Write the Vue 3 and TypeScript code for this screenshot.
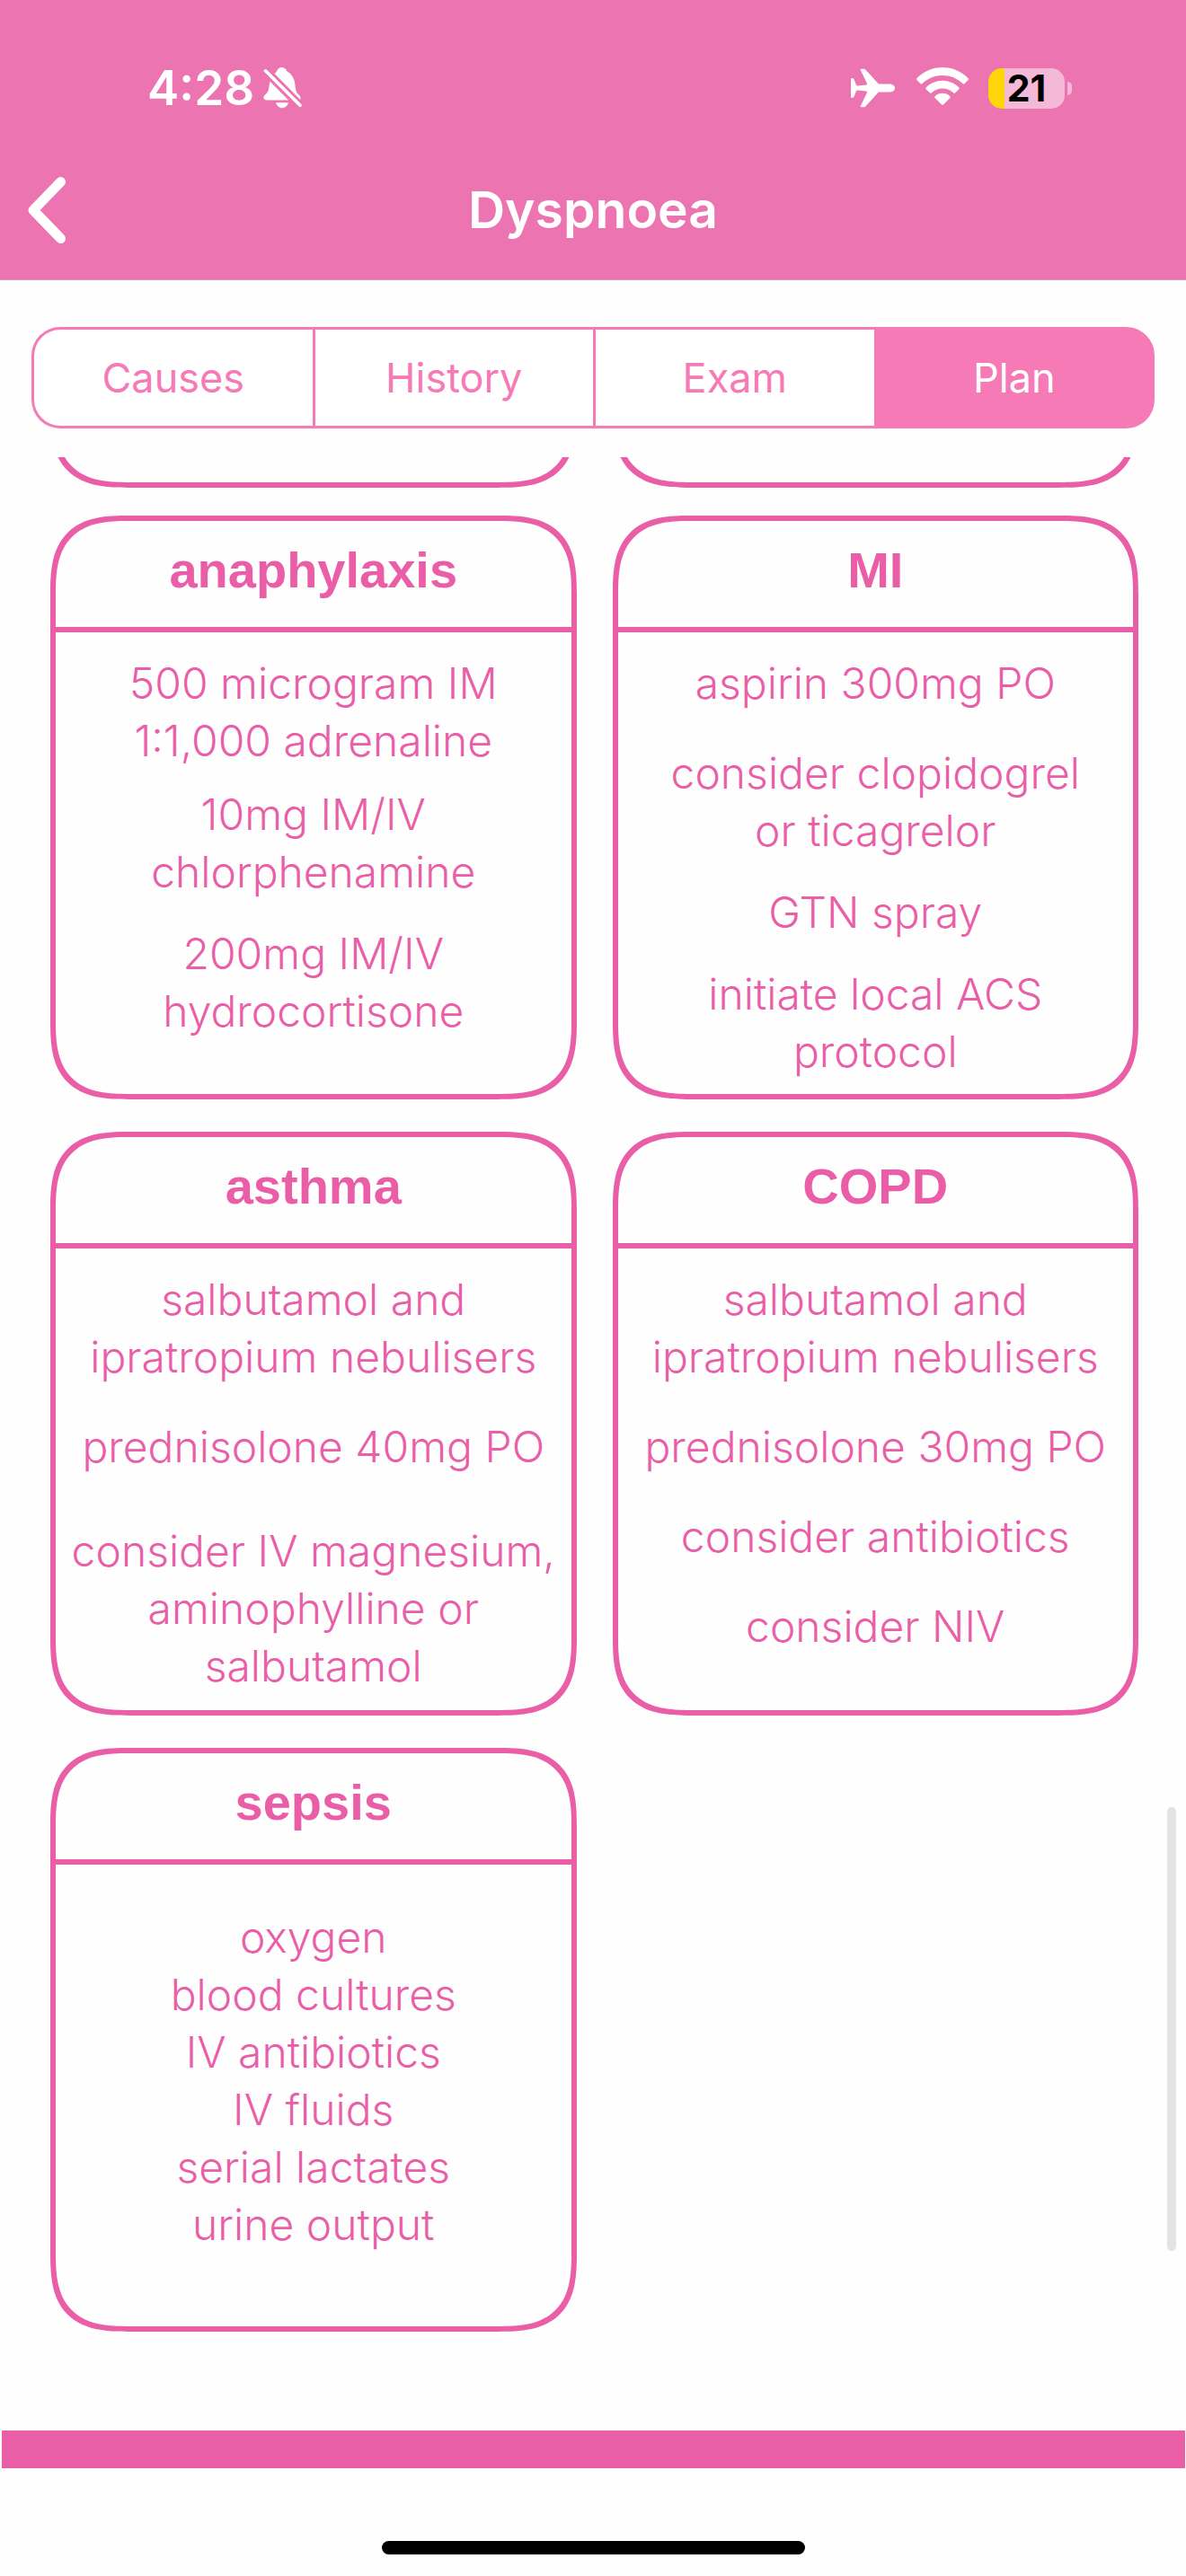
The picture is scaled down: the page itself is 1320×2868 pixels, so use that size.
<script setup lang="ts">
import { ref } from 'vue'

type Gap = 'none' | 'small' | 'medium' | 'large' | 'wide'

interface Step {
  lines: string[]
  gap: Gap
}

interface Card {
  title: string
  steps: Step[]
  centred?: boolean
}

const tabs: string[] = ['Causes', 'History', 'Exam', 'Plan']
const activeTab = ref<string>('Plan')

const cards: Card[] = [
  {
    title: 'anaphylaxis',
    steps: [
      { lines: ['500 microgram IM', '1:1,000 adrenaline'], gap: 'none' },
      { lines: ['10mg IM/IV', 'chlorphenamine'], gap: 'small' },
      { lines: ['200mg IM/IV', 'hydrocortisone'], gap: 'medium' },
    ],
  },
  {
    title: 'MI',
    steps: [
      { lines: ['aspirin 300mg PO'], gap: 'none' },
      { lines: ['consider clopidogrel', 'or ticagrelor'], gap: 'large' },
      { lines: ['GTN spray'], gap: 'medium' },
      { lines: ['initiate local ACS', 'protocol'], gap: 'medium' },
    ],
  },
  {
    title: 'asthma',
    steps: [
      { lines: ['salbutamol and', 'ipratropium nebulisers'], gap: 'none' },
      { lines: ['prednisolone 40mg PO'], gap: 'large' },
      { lines: ['consider IV magnesium,', 'aminophylline or', 'salbutamol'], gap: 'wide' },
    ],
  },
  {
    title: 'COPD',
    steps: [
      { lines: ['salbutamol and', 'ipratropium nebulisers'], gap: 'none' },
      { lines: ['prednisolone 30mg PO'], gap: 'large' },
      { lines: ['consider antibiotics'], gap: 'large' },
      { lines: ['consider NIV'], gap: 'large' },
    ],
  },
  {
    title: 'sepsis',
    centred: true,
    steps: [
      {
        lines: ['oxygen', 'blood cultures', 'IV antibiotics', 'IV fluids', 'serial lactates', 'urine output'],
        gap: 'none',
      },
    ],
  },
]
</script>

<template>
  <div class="screen">
    <header class="header">
      <div class="status">
        <div class="status-left">
          <span class="time">4:28</span>
          <svg class="bell" viewBox="0 0 44 46" aria-hidden="true">
            <path d="M12.6 7C14 5.500 14.500 5.500 15 4.500C16 1.500 18 0 20.500 0S25.500 1.500 26.500 4.500C27.500 5.500 29 5.500 30.500 7.500C34 11.500 35 15 35.500 20C36 25 36.500 27.500 38.500 29.500C41 31.500 42 33.500 41.200 36Z" />
            <path d="M7.300 15.500L28.200 36.400H3.500C1 36.400 0 34.500.6 32.500C1.500 30.500 4.500 29 5.500 26C6.500 23 6.700 19 7.300 15.500Z" />
            <path d="M14 39.300H28C27 43 24 45.300 21 45.300S15 43 14 39.300Z" />
            <path d="M2.500 3.800L41 42.300" fill="none" stroke="currentColor" stroke-width="3.600" stroke-linecap="round" />
          </svg>
        </div>
        <div class="status-right">
          <svg class="plane" viewBox="0 0 49 44" aria-hidden="true">
            <path d="M49 22C49 19 46 17.400 42 17.400H31.500C31 17.400 30.500 17 30 16.500L16.500 1.800C15.500.7 14.500.7 13.500.7H11.500C10.800.7 10.500 1.200 10.800 2L18 17C18.300 17.800 18 18.300 17.300 18.400L7 19.400C6.500 19.400 6.200 19.200 6 18.800L3.500 12.300C3.200 11.600 2.700 11.300 2 11.300H0V32.700H2C2.700 32.700 3.200 32.400 3.500 31.700L6 25.200C6.200 24.800 6.500 24.600 7 24.600L17.300 25.600C18 25.700 18.300 26.200 18 27L10.800 42C10.500 42.800 10.800 43.300 11.500 43.300H13.500C14.500 43.300 15.500 43.300 16.500 42.200L30 27.500C30.500 27 31 26.600 31.500 26.600H42C46 26.600 49 25 49 22Z" />
          </svg>
          <svg class="wifi" viewBox="0 0 58 42" aria-hidden="true">
            <path d="M.6 12C8 4.500 18 0 29 0S50 4.500 57.400 12C58.200 12.800 58.200 13.400 57.400 14.200L53.600 18C52.900 18.700 52.300 18.700 51.500 18C45.500 12.300 37.500 9 29 9S12.500 12.300 6.500 18C5.700 18.700 5.100 18.700 4.400 18L.6 14.200C-.2 13.400-.2 12.800.6 12Z" />
            <path d="M10.900 22.200C15.700 17.600 22 14.800 29 14.800S42.300 17.600 47.100 22.200C48 23 48 23.600 47.200 24.400L43.200 28.200C42.500 28.900 41.900 28.900 41.100 28.200C37.900 25.200 33.600 23.400 29 23.400S20.100 25.200 16.900 28.200C16.100 28.900 15.500 28.900 14.800 28.200L10.800 24.400C10 23.600 10 23 10.900 22.200Z" />
            <path d="M20.900 32C23 30 25.800 28.800 29 28.800S35 30 37.100 32C38 32.800 38 33.400 37.200 34.200L30.200 41.200C29.400 42 28.600 42 27.800 41.200L20.800 34.200C20 33.400 20 32.800 20.900 32Z" />
          </svg>
          <div class="battery">
            <span class="battery-body">21</span>
            <span class="battery-tip"></span>
          </div>
        </div>
      </div>
      <div class="nav">
        <button class="back" type="button" aria-label="Back">
          <svg viewBox="0 0 44 76" aria-hidden="true">
            <path d="M37.500 6.500L7 38L37.500 69.500" fill="none" stroke="currentColor" stroke-width="11" stroke-linecap="round" stroke-linejoin="round" />
          </svg>
        </button>
        <h1 class="title">Dyspnoea</h1>
      </div>
    </header>

    <nav class="tabs" aria-label="Sections">
      <button
        v-for="tab in tabs"
        :key="tab"
        type="button"
        class="tab"
        :class="{ active: tab === activeTab }"
        @click="activeTab = tab"
      >
        {{ tab }}
      </button>
    </nav>

    <main class="content">
      <div class="previous">
        <div class="card-end"></div>
        <div class="card-end"></div>
      </div>
      <div class="cards">
        <section v-for="card in cards" :key="card.title" class="card">
          <h2 class="card-title">{{ card.title }}</h2>
          <div class="card-body" :class="{ centred: card.centred }">
            <p v-for="(step, i) in card.steps" :key="i" class="step" :class="step.gap">
              <span v-for="line in step.lines" :key="line" class="line">{{ line }}</span>
            </p>
          </div>
        </section>
      </div>
      <div class="band"></div>
    </main>

    <div class="home"></div>
    <div class="scroll-thumb"></div>
  </div>
</template>

<style>
body {
  margin: 0;
  background: #fefefe;
}
</style>

<style scoped>
.screen {
  position: relative;
  display: flex;
  flex-direction: column;
  min-height: 100vh;
  box-sizing: border-box;
  padding-bottom: 24px;
  background: #fefefe;
  font-family: Inter, 'Liberation Sans', sans-serif;
}

.header {
  background: #ec74b0;
  border-bottom: 1px solid #c9a0b6;
  color: #fff;
}

.status {
  display: flex;
  justify-content: space-between;
  padding: 68px 127px 0 164px;
  height: 60px;
}

.status-left,
.status-right {
  display: flex;
  align-items: center;
}

.status svg {
  display: block;
  fill: currentColor;
}

.time {
  font-size: 53px;
  line-height: 60px;
  font-weight: 600;
}

.bell {
  width: 44px;
  height: 46px;
  margin-left: 10px;
}

.plane {
  width: 49px;
  height: 44px;
}

.wifi {
  width: 58px;
  height: 42px;
  margin: 0 22px 4px 24px;
}

.battery {
  display: flex;
  align-items: center;
  gap: 3px;
}

.battery-body {
  width: 85px;
  height: 45px;
  border-radius: 15px;
  background: linear-gradient(to right, #ffd60a 18px, #f5b9d8 18px);
  color: #000;
  font-size: 41px;
  line-height: 44px;
  font-weight: 700;
  text-align: center;
}

.battery-tip {
  width: 5px;
  height: 15px;
  border-radius: 0 5px 5px 0;
  background: #f5b9d8;
}

.nav {
  display: grid;
  grid-template-columns: 1fr auto 1fr;
  align-items: center;
  box-sizing: border-box;
  padding: 28px 30px 0;
  height: 183px;
  align-content: center;
}

.back {
  width: 44px;
  height: 76px;
  padding: 0;
  border: 0;
  background: none;
  color: inherit;
}

.back svg {
  display: block;
  width: 44px;
  height: 76px;
}

.title {
  margin: 0;
  font-size: 57px;
  line-height: 72px;
  font-weight: 600;
}

.tabs {
  display: flex;
  margin: 52px 35px 32px;
  height: 113px;
}

.tab {
  flex: 1 1 25%;
  box-sizing: border-box;
  padding: 0;
  border: 3px solid #f67ab6;
  border-right-width: 0;
  background: #fff;
  color: #f67ab6;
  font-family: inherit;
  font-size: 45px;
  font-weight: 400;
}

.tab:first-child {
  border-radius: 32px 0 0 32px;
}

.tab:last-child {
  border-right-width: 3px;
  border-radius: 0 32px 32px 0;
}

.tab.active {
  background: #f67ab6;
  color: #fff;
}

.content {
  flex: 1;
}

.previous {
  display: grid;
  grid-template-columns: 1fr 1fr;
  column-gap: 40px;
  align-content: end;
  height: 34px;
  margin: 0 53px 31px 56px;
  overflow: hidden;
}

.card-end {
  height: 200px;
  box-sizing: border-box;
  border: 6px solid #ea5ea8;
  border-radius: 68px;
}

.cards {
  display: grid;
  grid-template-columns: 1fr 1fr;
  grid-auto-rows: 650px;
  gap: 36px 40px;
  margin: 0 53px 110px 56px;
}

.card {
  border: 6px solid #ea5ea8;
  border-radius: 68px;
  color: #ea5ea8;
  text-align: center;
}

/* Continuous-curvature corners where the browser can draw them */
@supports (corner-shape: superellipse(1.5)) {
  .card,
  .card-end {
    border-radius: 88px;
    corner-shape: superellipse(1.5);
  }
}

.card-title {
  margin: 0;
  height: 118px;
  border-bottom: 6px solid #ea5ea8;
  font-family: 'Liberation Sans', sans-serif;
  font-size: 56px;
  line-height: 110px;
  font-weight: 700;
}

.card-body {
  padding-top: 25px;
}

.card-body.centred {
  padding-top: 49px;
}

.step {
  margin: 0;
  font-size: 48px;
  line-height: 64px;
  font-weight: 300;
}

.line {
  display: block;
  white-space: nowrap;
}

.small {
  margin-top: 18px;
}

.medium {
  margin-top: 27px;
}

.large {
  margin-top: 36px;
}

.wide {
  margin-top: 52px;
}

.band {
  height: 42px;
  margin: 0 1px 0 2px;
  background: #ea5ea8;
}

.home {
  width: 471px;
  height: 15px;
  margin: 81px auto 0;
  border-radius: 8px;
  background: #000;
}

.scroll-thumb {
  position: absolute;
  top: 2012px;
  right: 11px;
  width: 10px;
  height: 494px;
  border-radius: 5px;
  background: #e3e3e3;
}
</style>
